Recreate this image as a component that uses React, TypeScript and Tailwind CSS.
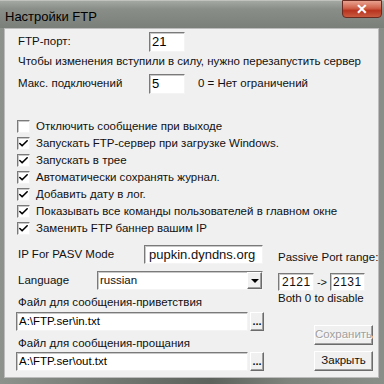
import { Check } from "lucide-react";

const sunken =
  "bg-white border border-t-[#7a7a7a] border-l-[#7a7a7a] border-b-[#f4f4f4] border-r-[#f4f4f4] shadow-[inset_1px_1px_0_#c8c8c8]";
const raised =
  "bg-[#f0f0f0] border border-t-white border-l-white border-b-[#6b6b6b] border-r-[#6b6b6b] shadow-[inset_-1px_-1px_0_#a0a0a0]";

const options = [
  { label: "Отключить сообщение при выходе", checked: false },
  { label: "Запускать FTP-сервер при загрузке Windows.", checked: true },
  { label: "Запускать в трее", checked: true },
  { label: "Автоматически сохранять журнал.", checked: true },
  { label: "Добавить дату в лог.", checked: true },
  { label: "Показывать все команды пользователей в главном окне", checked: true },
  { label: "Заменить FTP баннер вашим IP", checked: true },
];

function Box({ checked }: { checked: boolean }) {
  return (
    <span className={`flex h-[13px] w-[13px] items-center justify-center ${sunken}`}>
      {checked && <Check size={11} strokeWidth={3.5} className="text-black" />}
    </span>
  );
}

function Field({ value, className }: { value: string; className: string }) {
  return (
    <div className={`flex items-center pl-[2px] text-black ${sunken} ${className}`}>
      {value}
    </div>
  );
}

function Dots() {
  return (
    <div className={`flex h-[19px] w-[14px] items-center justify-center text-[11px] font-bold leading-none ${raised}`}>
      ...
    </div>
  );
}

export default function App() {
  return (
    <div
      className="flex h-[384px] w-[384px] flex-col whitespace-nowrap bg-[linear-gradient(90deg,#8e928c_0%,#6a6e68_40%,#5e625c_55%,#7e837c_75%,#8a8e88_100%)] text-[#111]"
      style={{ fontFamily: '"Liberation Sans", Arial, sans-serif' }}
    >
      <div className="flex h-[28px] items-start justify-between border-t border-[#bfc2bd] bg-[linear-gradient(180deg,#a4a8a2_0%,#8a8e88_30%,#7b7f79_100%)]">
        <span className="mt-[6px] pl-[5px] text-[13px] text-black">Настройки FTP</span>
        <div className="mr-[2px] mt-[-1px] flex h-[18px] w-[40px] items-center justify-center rounded-b-[4px] border border-[#6b2a20] bg-[linear-gradient(180deg,#e8a290_0%,#d0614a_45%,#b9341f_60%,#c85a40_100%)]">
          <span className="text-[14px] font-bold leading-none text-white">✕</span>
        </div>
      </div>

      <div className="mx-[4px] mb-[6px] mr-[5px] flex flex-1 flex-col border border-[#bcbcbc] bg-[#f0f0f0] text-[11.5px]">
        <div className="mt-[3px] flex h-[20px] items-center pl-[13px]">
          <span className="w-[131px]">FTP-порт:</span>
          <Field value="21" className="h-[20px] w-[36px] text-[13px]" />
        </div>
        <div className="mt-[2px] flex h-[16px] items-center pl-[13px]">
          Чтобы изменения вступили в силу, нужно перезапустить сервер
        </div>
        <div className="mt-[4px] flex h-[20px] items-center pl-[13px]">
          <span className="w-[131px]">Макс. подключений</span>
          <Field value="5" className="h-[20px] w-[36px] text-[13px]" />
          <span className="ml-[13px]">0 = Нет ограничений</span>
        </div>

        <div className="mt-[24px] flex flex-col pl-[12px]">
          {options.map((o) => (
            <div key={o.label} className="flex h-[17px] items-center gap-[6px]">
              <Box checked={o.checked} />
              <span>{o.label}</span>
            </div>
          ))}
        </div>

        <div className="flex pl-[11px]">
          <div className="flex w-[248px] flex-col">
            <div className="mt-[8px] flex h-[19px] items-center">
              <span className="w-[128px] pl-[2px]">IP For PASV Mode</span>
              <div className={`flex h-[19px] w-[119px] items-center pl-[4px] text-[13px] ${sunken}`}>
                pupkin.dyndns.org
              </div>
            </div>
            <div className="mt-[7px] flex h-[19px] items-center">
              <span className="w-[81px] pl-[2px]">Language</span>
              <div className={`flex h-[19px] w-[166px] items-center justify-between pl-[2px] ${sunken}`}>
                <span>russian</span>
                <div className={`flex h-[17px] w-[15px] items-center justify-center ${raised}`}>
                  <span className="h-0 w-0 border-x-[4px] border-t-[4px] border-x-transparent border-t-black" />
                </div>
              </div>
            </div>
            <div className="mt-[6px] flex h-[14px] items-center pl-[2px]">Файл для сообщения-приветствия</div>
            <div className="mt-[2px] flex items-center gap-[2px]">
              <Field value="A:\FTP.ser\in.txt" className="h-[19px] w-[232px]" />
              <Dots />
            </div>
            <div className="mt-[6px] flex h-[14px] items-center pl-[2px]">Файл для сообщения-прощания</div>
            <div className="mt-[1px] flex items-center gap-[2px]">
              <Field value="A:\FTP.ser\out.txt" className="h-[19px] w-[232px]" />
              <Dots />
            </div>
          </div>

          <div className="ml-[14px] flex w-[96px] flex-col">
            <div className="mt-[14px] flex h-[14px] items-center">Passive Port range:</div>
            <div className="mt-[8px] flex items-center">
              <div className={`flex h-[18px] w-[36px] items-center pl-[3px] text-[12px] tracking-[0.5px] ${sunken}`}>2121</div>
              <span className="w-[16px] text-center text-[11px]">-&gt;</span>
              <div className={`flex h-[18px] w-[35px] items-center pl-[2px] text-[12px] tracking-[0.5px] ${sunken}`}>2131</div>
            </div>
            <div className="mt-[1px] flex h-[14px] items-center">Both 0 to disable</div>
            <div className={`ml-[36px] mt-[19px] flex h-[20px] w-[59px] items-center justify-center text-[#a0a0a0] [text-shadow:1px_1px_0_#fff] ${raised}`}>
              Сохранить
            </div>
            <div className={`ml-[36px] mt-[6px] flex h-[20px] w-[59px] items-center justify-center ${raised}`}>
              Закрыть
            </div>
          </div>
        </div>
      </div>
    </div>
  );
}
